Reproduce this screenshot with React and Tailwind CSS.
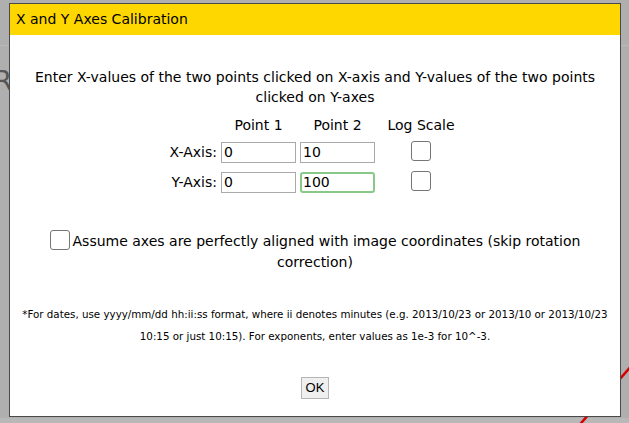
import React from "react";

function Box({ className = "" }) {
  return <span className={"inline-block w-5 h-5 rounded-[3px] border border-[#767676] bg-white " + className} />;
}

export default function App() {
  const font = { fontFamily: '"DejaVu Sans", Verdana, sans-serif' };
  return (
    <div className="relative w-[629px] h-[423px] overflow-hidden bg-[#afafaf]" style={font}>
      {/* background canvas remnants */}
      <div className="absolute left-[-6px] top-[62px] text-[26px] text-[#555]">R</div>
      <div className="absolute left-0 top-[45px] w-full h-px bg-[#b9b9b9]" />
      <div className="absolute left-0 top-[418px] w-full h-[5px] bg-[#b8b8b8]" />
      <svg className="absolute left-0 top-0" width="629" height="423">
        <line x1="575" y1="430" x2="640" y2="356" stroke="#d40000" strokeWidth="2.5" />
      </svg>

      {/* dialog */}
      <div className="absolute left-[9px] top-[3px] w-[612px] h-[414px] bg-white border border-[#4a4a4a] flex flex-col text-black">
        <div className="h-[31px] bg-[#ffd700] flex items-center px-[6px] text-[14px]">X and Y Axes Calibration</div>
        <div className="flex flex-col items-center px-3">
          <p className="mt-[32px] text-[14px] leading-[20px] text-center px-2">
            Enter X-values of the two points clicked on X-axis and Y-values of the two points clicked on Y-axes
          </p>
          <div className="mt-[9px] grid grid-cols-[50px_75px_75px_84px] gap-x-[4px] text-[14px] items-center">
            <div className="h-[18px]" />
            <div className="text-center leading-[18px]">Point 1</div>
            <div className="text-center leading-[18px]">Point 2</div>
            <div className="text-center leading-[18px]">Log Scale</div>

            <div className="h-[30px] flex items-center justify-end whitespace-nowrap pt-[6px]">X-Axis:</div>
            <div className="h-[30px] flex items-center pt-[6px]">
              <div className="w-[75px] h-[21px] border border-[#a9a9a9] px-[2px] flex items-center text-[14px]">0</div>
            </div>
            <div className="h-[30px] flex items-center pt-[6px]">
              <div className="w-[75px] h-[21px] border border-[#a9a9a9] px-[2px] flex items-center text-[14px]">10</div>
            </div>
            <div className="h-[30px] flex items-center justify-center pt-[4px]"><Box /></div>

            <div className="h-[30px] flex items-center justify-end whitespace-nowrap pt-[6px]">Y-Axis:</div>
            <div className="h-[30px] flex items-center pt-[6px]">
              <div className="w-[75px] h-[21px] border border-[#a9a9a9] px-[2px] flex items-center text-[14px]">0</div>
            </div>
            <div className="h-[30px] flex items-center pt-[6px]">
              <div className="w-[75px] h-[21px] border-2 border-[#88c888] rounded-[3px] px-[1px] flex items-center text-[14px]">100</div>
            </div>
            <div className="h-[30px] flex items-center justify-center pt-[4px]"><Box /></div>
          </div>

          <p className="mt-[36px] text-[14px] leading-[21px] text-center">
            <Box className="align-[-4px] mr-[3px]" />Assume axes are perfectly aligned with image coordinates (skip rotation correction)
          </p>

          <p className="mt-[30px] text-[10.3px] leading-[22px] text-center">
            <span className="whitespace-nowrap">*For dates, use yyyy/mm/dd hh:ii:ss format, where ii denotes minutes (e.g. 2013/10/23 or 2013/10 or 2013/10/23</span>
            <br />
            10:15 or just 10:15). For exponents, enter values as 1e-3 for 10^-3.
          </p>

          <button
            className="mt-[30px] w-[28px] h-[22px] border border-[#b5b5b5] bg-[#efefef] text-[13px] flex items-center justify-center"
            style={{ fontFamily: '"Liberation Sans", Arial, sans-serif' }}
          >
            OK
          </button>
        </div>
      </div>
    </div>
  );
}
